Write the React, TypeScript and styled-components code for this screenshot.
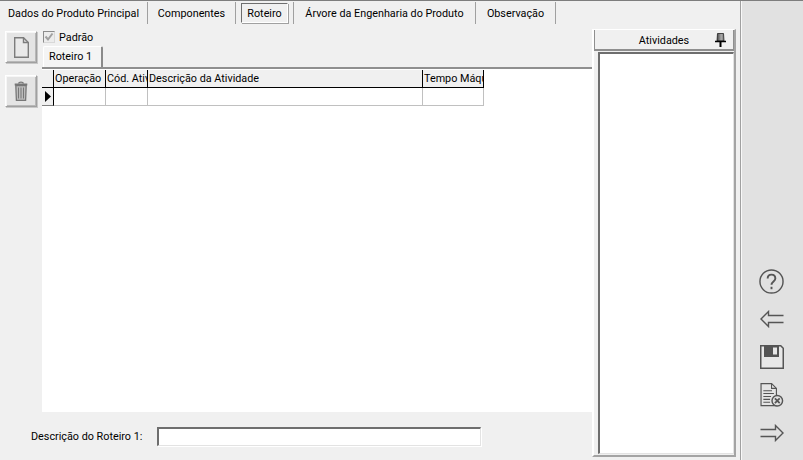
import React from "react"
import styled, { createGlobalStyle } from "styled-components"

const GlobalStyle = createGlobalStyle`
  html, body {
    margin: 0;
    padding: 0;
    background: #f0f0f0;
  }
  body {
    font-family: Roboto, "Liberation Sans", Arial, sans-serif;
    font-size: 10.8px;
    color: #000;
    overflow: hidden;
  }
`

const Window = styled.div`
  width: 803px;
  height: 460px;
  display: flex;
  border-top: 1px solid #7d7d7d;
  box-sizing: border-box;
  background: #f0f0f0;
  overflow: hidden;
`

const Main = styled.div`
  width: 740px;
  display: flex;
  flex-direction: column;
`

const TabBar = styled.div`
  height: 22px;
  margin-top: 1px;
  display: flex;
  flex: none;
`

const PageTab = styled.div<{ $width: number }>`
  width: ${(p) => p.$width}px;
  box-sizing: border-box;
  border-right: 1px solid #a0a0a0;
  display: flex;
  align-items: center;
  justify-content: center;
  white-space: nowrap;
`

const SelectedLabel = styled.span`
  display: block;
  height: 20px;
  line-height: 20px;
  padding: 0 5px;
  box-sizing: border-box;
  border: 1px solid;
  border-color: #6e6e6e #fff #fff #6e6e6e;
  box-shadow: 1px 1px 0 #a0a0a0;
`

const Body = styled.div`
  flex: 1;
  display: flex;
  min-height: 0;
`

const ToolColumn = styled.div`
  width: 42px;
  flex: none;
  padding: 7px 0 0 5px;
  box-sizing: border-box;
  display: flex;
  flex-direction: column;
  gap: 12px;
`

const ToolButton = styled.button`
  width: 32px;
  height: 32px;
  padding: 0;
  background: #e4e4e4;
  border: 1px solid;
  border-color: #fff #a0a0a0 #a0a0a0 #fff;
  box-shadow: 1px 1px 0 #c8c8c8, inset 1px 1px 0 #f6f6f6, inset -1px -1px 0 #b8b8b8;
  display: flex;
  align-items: center;
  justify-content: center;
`

const Center = styled.div`
  width: 550px;
  flex: none;
  display: flex;
  flex-direction: column;
`

const CheckRow = styled.label`
  height: 20px;
  padding: 6px 0 0 1px;
  box-sizing: border-box;
  display: flex;
  align-items: center;
  gap: 4px;
`

const CheckBox = styled.span`
  width: 12px;
  height: 12px;
  box-sizing: border-box;
  border: 1px solid;
  border-color: #8c8c8c #d8d8d8 #d8d8d8 #8c8c8c;
  background: #ececec;
  display: flex;
`

const InnerTabs = styled.div`
  height: 23px;
  padding: 2px 0 0 1px;
  box-sizing: border-box;
  flex: none;
`

const InnerTab = styled.div`
  width: 60px;
  height: 21px;
  box-sizing: border-box;
  background: #f4f4f4;
  border: 1px solid #fff;
  border-right: 2px solid #8a8a8a;
  border-bottom: 0;
  border-radius: 2px 2px 0 0;
  padding-left: 5px;
  line-height: 19px;
`

const GridArea = styled.div`
  flex: 1;
  background: #fff;
  border-top: 2px solid #8f8f8f;
  min-height: 0;
`

const GridRow = styled.div<{ $header?: boolean }>`
  display: flex;
  height: ${(p) => (p.$header ? 19 : 18)}px;
  box-sizing: border-box;
  width: 442px;
  background: ${(p) => (p.$header ? "#f0f0f0" : "#fff")};
  border-top: ${(p) => (p.$header ? "1px solid #fff" : "none")};
`

const Cell = styled.div<{ $width: number; $header?: boolean }>`
  width: ${(p) => p.$width}px;
  flex: none;
  box-sizing: border-box;
  overflow: hidden;
  white-space: nowrap;
  padding-left: 1px;
  line-height: 17px;
  border-right: 1px solid ${(p) => (p.$header ? "#000" : "#c0c0c0")};
  border-bottom: 1px solid ${(p) => (p.$header ? "#000" : "#c0c0c0")};
`

const Indicator = styled.div<{ $header?: boolean }>`
  width: 12px;
  flex: none;
  box-sizing: border-box;
  background: #f0f0f0;
  border-right: 1px solid #000;
  border-bottom: 1px solid ${(p) => (p.$header ? "#000" : "#808080")};
  display: flex;
  align-items: center;
  padding-left: 3px;
`

const DescriptionRow = styled.div`
  height: 48px;
  flex: none;
  display: flex;
  align-items: center;
  margin-left: -11px;
`

const DescriptionLabel = styled.span`
  width: 126px;
  flex: none;
  white-space: nowrap;
`

const DescriptionInput = styled.div`
  width: 324px;
  height: 19px;
  box-sizing: border-box;
  background: #fff;
  border: 1px solid;
  border-top-width: 2px;
  border-left-width: 2px;
  border-color: #6e6e6e #e3e3e3 #e3e3e3 #6e6e6e;
  box-shadow: 1px 1px 0 #fff;
`

const ActivityPanel = styled.div`
  width: 144px;
  flex: none;
  margin-top: 5px;
  margin-bottom: 3px;
  padding-bottom: 1px;
  box-sizing: border-box;
  display: flex;
  flex-direction: column;
  border-left: 2px solid #fff;
  border-top: 1px solid #fff;
  border-right: 2px solid #a4a4a4;
  border-bottom: 2px solid #a4a4a4;
`

const ActivityHeader = styled.div`
  height: 21px;
  flex: none;
  box-sizing: border-box;
  position: relative;
  background: #f0f0f0;
  border-left: 1px solid #8f8f8f;
  border-right: 1px solid #8f8f8f;
  border-bottom: 2px solid #8f8f8f;
  text-align: center;
  line-height: 22px;
`

const PinHolder = styled.span`
  position: absolute;
  right: 7px;
  top: 3px;
  display: flex;
`

const ActivityList = styled.div`
  flex: 1;
  margin-left: 4px;
  margin-top: 1px;
  background: #fff;
  box-sizing: border-box;
  border: 1px solid;
  border-left-width: 2px;
  border-top-width: 2px;
  border-color: #6e6e6e #e3e3e3 #e3e3e3 #6e6e6e;
`

const Side = styled.div`
  flex: 1;
  background: #e1e1e1;
  border-left: 1px solid #a0a0a0;
  box-shadow: inset 1px 0 0 #f8f8f8;
  box-sizing: border-box;
  display: flex;
  flex-direction: column;
  align-items: center;
  justify-content: flex-end;
  padding: 0 1px 14px 0;
  gap: 12px;
`

const SideIcon = styled.span`
  width: 26px;
  height: 26px;
  display: flex;
  align-items: center;
  justify-content: center;
`

const stroke = "#555"

const NewFileIcon = () => (
  <svg width="15" height="21" viewBox="0 0 15 21" fill="none" stroke="#7c7c7c" strokeWidth="1.400">
    <path d="M.7.700h8.800l4.800 4.800v14.800H.7z" fill="#e9e9e9" />
    <path d="M9.500.700v4.800h4.800" />
  </svg>
)

const TrashIcon = () => (
  <svg width="14" height="20" viewBox="0 0 14 20" fill="none" stroke="#777" strokeWidth="1.300">
    <path d="M4.500 2.500C5 .6 9 .6 9.500 2.500" />
    <path d="M.7 3.500h12.600" strokeWidth="2" />
    <path d="M1.800 4.500l.6 14.800h9.200l.6-14.800z" fill="#bcbcbc" />
    <path d="M4.500 6.500v11M7 6.500v11M9.500 6.500v11" strokeWidth="1" />
  </svg>
)

const CheckMark = () => (
  <svg width="10" height="10" viewBox="0 0 10 10" fill="none" stroke="#a0a0a0" strokeWidth="2">
    <path d="M1.500 4.500l2.500 3 4.500-6" />
  </svg>
)

const RowPointer = () => (
  <svg width="6" height="11" viewBox="0 0 6 11" fill="#000">
    <path d="M0 0l6 5.500-6 5.500z" />
  </svg>
)

const PinIcon = () => (
  <svg width="11" height="14" viewBox="0 0 11 14">
    <defs>
      <linearGradient id="pinHead" x1="0" x2="1" y1="0" y2="0">
        <stop offset="0" stopColor="#444" />
        <stop offset="0.6" stopColor="#aaa" />
        <stop offset="1" stopColor="#777" />
      </linearGradient>
    </defs>
    <path d="M2.500.500h6l.5 7.500H2z" fill="url(#pinHead)" stroke="#222" strokeWidth="0.800" />
    <path d="M0 8.500h11" stroke="#000" strokeWidth="1.500" />
    <path d="M5.500 9v5" stroke="#000" strokeWidth="2" />
  </svg>
)

const HelpIcon = () => (
  <svg width="25" height="25" viewBox="0 0 26 26" fill="none" stroke={stroke} strokeWidth="1.500">
    <circle cx="13" cy="13" r="12" />
    <path d="M9 10c0-5.500 8-5.500 8 0 0 3-4 3-4 6.500" strokeWidth="2" />
    <path d="M13 18.500v2.500" strokeWidth="2" />
  </svg>
)

const BackIcon = () => (
  <svg width="24" height="18" viewBox="0 0 24 18" fill="none" stroke={stroke} strokeWidth="1.400">
    <path d="M23.500 5.500H8.500V1.500L1 9l7.500 7.500v-4h15" />
  </svg>
)

const SaveIcon = () => (
  <svg width="24" height="24" viewBox="0 0 24 24">
    <path d="M.75.750h20l2.500 2.500v20H.75z" fill="#e8e8e8" stroke={stroke} strokeWidth="1.500" />
    <path d="M4 1h15v11H4z" fill="#555" />
    <path d="M13 2.500h4v7h-4z" fill="#e8e8e8" />
  </svg>
)

const CancelDocIcon = () => (
  <svg width="24" height="25" viewBox="0 0 24 26" fill="none" stroke={stroke} strokeWidth="1.200">
    <path d="M.6.600h11l5 5v18H.6z" fill="#e4e4e4" />
    <path d="M11.500.600v5h5M3 8h9M3 11h11M3 14h8M3 17h7M3 20h7" strokeWidth="1.100" />
    <circle cx="17.500" cy="18.500" r="5.500" fill="#e1e1e1" strokeWidth="1.500" />
    <path d="M15 16l5 5M20 16l-5 5" strokeWidth="1.800" />
  </svg>
)

const ForwardIcon = () => (
  <svg width="24" height="18" viewBox="0 0 24 18" fill="none" stroke={stroke} strokeWidth="1.400">
    <path d="M.5 5.500h15V1.500L23 9l-7.500 7.500v-4H.5" />
  </svg>
)

const pageTabs = [
  { label: "Dados do Produto Principal", width: 148 },
  { label: "Componentes", width: 88 },
  { label: "Roteiro", width: 58, selected: true },
  { label: "Árvore da Engenharia do Produto", width: 182 },
  { label: "Observação", width: 80 },
]

const columns = [
  { label: "Operação", width: 52 },
  { label: "Cód. Atividade", width: 42 },
  { label: "Descrição da Atividade", width: 275 },
  { label: "Tempo Máquina", width: 61 },
]

const App: React.FC = () => {
  return (
    <Window>
      <GlobalStyle />
      <Main>
        <TabBar>
          {pageTabs.map((tab) => (
            <PageTab key={tab.label} $width={tab.width}>
              {tab.selected ? <SelectedLabel>{tab.label}</SelectedLabel> : tab.label}
            </PageTab>
          ))}
        </TabBar>
        <Body>
          <ToolColumn>
            <ToolButton>
              <NewFileIcon />
            </ToolButton>
            <ToolButton>
              <TrashIcon />
            </ToolButton>
          </ToolColumn>
          <Center>
            <CheckRow>
              <CheckBox>
                <CheckMark />
              </CheckBox>
              Padrão
            </CheckRow>
            <InnerTabs>
              <InnerTab>Roteiro 1</InnerTab>
            </InnerTabs>
            <GridArea>
              <GridRow $header>
                <Indicator $header />
                {columns.map((col) => (
                  <Cell key={col.label} $width={col.width} $header>
                    {col.label}
                  </Cell>
                ))}
              </GridRow>
              <GridRow>
                <Indicator>
                  <RowPointer />
                </Indicator>
                {columns.map((col) => (
                  <Cell key={col.label} $width={col.width} />
                ))}
              </GridRow>
            </GridArea>
            <DescriptionRow>
              <DescriptionLabel>Descrição do Roteiro 1:</DescriptionLabel>
              <DescriptionInput />
            </DescriptionRow>
          </Center>
          <ActivityPanel>
            <ActivityHeader>
              Atividades
              <PinHolder>
                <PinIcon />
              </PinHolder>
            </ActivityHeader>
            <ActivityList />
          </ActivityPanel>
        </Body>
      </Main>
      <Side>
        <SideIcon>
          <HelpIcon />
        </SideIcon>
        <SideIcon>
          <BackIcon />
        </SideIcon>
        <SideIcon>
          <SaveIcon />
        </SideIcon>
        <SideIcon>
          <CancelDocIcon />
        </SideIcon>
        <SideIcon>
          <ForwardIcon />
        </SideIcon>
      </Side>
    </Window>
  )
}

export default App
